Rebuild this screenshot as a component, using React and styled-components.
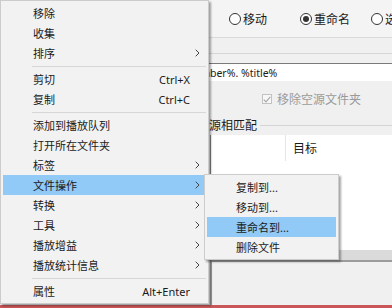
import React from 'react'
import styled, { createGlobalStyle } from 'styled-components'

const GlobalStyle = createGlobalStyle`
  html, body {
    margin: 0;
    padding: 0;
  }
  body {
    width: 392px;
    height: 308px;
    overflow: hidden;
    background: #f0f0f0;
    font-family: "Noto Sans", "Noto Sans CJK SC", sans-serif;
    font-size: 11px;
    color: #1a1a1a;
  }
`

const Screen = styled.div`
  position: relative;
  width: 392px;
  height: 308px;
  overflow: hidden;
  background: #f0f0f0;
`

const Dialog = styled.div`
  display: flex;
  flex-direction: column;
  height: 100%;
`

const RadioBar = styled.div`
  height: 37px;
  flex: none;
  display: grid;
  grid-template-columns: repeat(3, 71px);
  align-items: center;
  padding-left: 229px;
  background: #f4f4f4;
  border-bottom: 1px solid #dadada;
`

const RadioOption = styled.label`
  display: flex;
  align-items: center;
  gap: 2px;
  white-space: nowrap;
  font-size: 12px;
`

const RadioCircle = styled.span`
  width: 12px;
  height: 12px;
  flex: none;
  box-sizing: border-box;
  border: 1px solid #333;
  border-radius: 50%;
  background: #fff;
  display: flex;
  align-items: center;
  justify-content: center;

  &::after {
    content: '';
    width: 6px;
    height: 6px;
    border-radius: 50%;
    background: ${({ checked }) => (checked ? '#333' : 'transparent')};
  }
`

const Strip = styled.div`
  height: 15px;
  flex: none;
  border-bottom: 1px solid #d6d6d6;
`

const PatternField = styled.div`
  height: 17px;
  flex: none;
  margin: 9px 0 0 209px;
  border-top: 1px solid #7a7a7a;
  background: #fff;
  display: flex;
  align-items: center;
  font-size: 10.5px;
  white-space: nowrap;
  overflow: hidden;
`

const ScrolledText = styled.span`
  margin-left: ${({ offset }) => -offset}px;
`

const CheckRow = styled.div`
  height: 18px;
  flex: none;
  margin-top: 9px;
  padding-left: 262px;
  display: flex;
  align-items: center;
  gap: 5px;
  color: #9a9a9a;
  font-size: 12px;
`

const CheckBox = styled.span`
  width: 10px;
  height: 10px;
  box-sizing: border-box;
  border: 1px solid #c2c2c2;
  background: #f7f7f7;
  display: flex;
  align-items: center;
  justify-content: center;
`

const GroupTitle = styled.div`
  height: 14px;
  flex: none;
  margin-top: 10px;
  padding-left: 197px;
  display: flex;
  align-items: center;
  gap: 3px;
  font-size: 12px;
  white-space: nowrap;

  &::after {
    content: '';
    flex: 1;
    height: 1px;
    background: #d5d5d5;
  }
`

const ResultList = styled.div`
  height: 115px;
  flex: none;
  margin: 3px 0 0 210px;
  box-sizing: border-box;
  border-left: 1px solid #828282;
  background: #fff;
`

const ListHeader = styled.div`
  height: 26px;
  display: flex;
`

const HeaderCell = styled.div`
  width: ${({ width }) => width}px;
  flex: none;
  box-sizing: border-box;
  padding-left: 7px;
  display: flex;
  align-items: center;
  font-size: 12px;
  border-right: ${({ divider }) => (divider ? '1px solid #e5e5e5' : 'none')};
`

const ListFooter = styled.div`
  height: 10px;
  flex: none;
  margin-left: 210px;
  background: #dadada;
`

const StatusPanel = styled.div`
  flex: 1;
  margin-left: 210px;
  border-top: 2px solid #9c9c9c;
  border-left: 2px solid #9c9c9c;
  background: #f0f0f0;
`

const AccentLine = styled.div`
  height: 3px;
  flex: none;
  background: #c9575a;
`

const Menu = styled.div`
  position: absolute;
  left: ${({ left }) => left}px;
  top: ${({ top }) => top}px;
  width: ${({ width }) => width}px;
  box-sizing: border-box;
  padding: 2px;
  background: #f2f2f2;
  border: 1px solid #cccccc;
  box-shadow: 2px 2px 2px rgba(0, 0, 0, 0.35);
  display: flex;
  flex-direction: column;
`

const MenuItem = styled.div`
  height: 20px;
  display: flex;
  align-items: center;
  padding-left: ${({ indent }) => indent}px;
  background: ${({ active }) => (active ? '#91c9f7' : 'transparent')};
  white-space: nowrap;
`

const ItemLabel = styled.span`
  flex: 1;
`

const Shortcut = styled.span`
  color: #1a1a1a;
`

const ArrowSlot = styled.span`
  width: 16px;
  flex: none;
  display: flex;
  align-items: center;
  padding-left: 5px;
  box-sizing: border-box;
`

const Separator = styled.div`
  height: 6px;
  display: flex;
  align-items: center;
  padding-left: 29px;

  &::after {
    content: '';
    flex: 1;
    height: 1px;
    background: #d7d7d7;
  }
`

const Chevron = () => (
  <svg width="5" height="8" viewBox="0 0 5 8">
    <path d="M0.7 0.7 L4 4 L0.7 7.3" fill="none" stroke="#444" strokeWidth="1" />
  </svg>
)

const mainItems = [
  { label: '移除' },
  { label: '收集' },
  { label: '排序', sub: true },
  { sep: true },
  { label: '剪切', key: 'Ctrl+X' },
  { label: '复制', key: 'Ctrl+C' },
  { sep: true },
  { label: '添加到播放队列' },
  { label: '打开所在文件夹' },
  { label: '标签', sub: true },
  { label: '文件操作', sub: true, active: true },
  { label: '转换', sub: true },
  { label: '工具', sub: true },
  { label: '播放增益', sub: true },
  { label: '播放统计信息', sub: true },
  { sep: true },
  { label: '属性', key: 'Alt+Enter' },
]

const fileItems = [
  { label: '复制到...' },
  { label: '移动到...' },
  { label: '重命名到...', active: true },
  { label: '删除文件' },
]

export default function App() {
  return (
    <Screen>
      <GlobalStyle />
      <Dialog>
        <RadioBar>
          <RadioOption>
            <RadioCircle />
            移动
          </RadioOption>
          <RadioOption>
            <RadioCircle checked />
            重命名
          </RadioOption>
          <RadioOption>
            <RadioCircle />
            选择
          </RadioOption>
        </RadioBar>
        <Strip />
        <PatternField>
          <ScrolledText offset={55}>%tracknumber%. %title%</ScrolledText>
        </PatternField>
        <CheckRow>
          <CheckBox>
            <svg width="8" height="7" viewBox="0 0 8 7">
              <path d="M0.8 3.6 L3 5.8 L7.3 0.8" fill="none" stroke="#a8a8a8" strokeWidth="1.2" />
            </svg>
          </CheckBox>
          移除空源文件夹
        </CheckRow>
        <GroupTitle>与源相匹配</GroupTitle>
        <ResultList>
          <ListHeader>
            <HeaderCell width={75} divider />
            <HeaderCell width={107}>目标</HeaderCell>
          </ListHeader>
        </ResultList>
        <ListFooter />
        <StatusPanel />
        <AccentLine />
      </Dialog>

      <Menu left={0} top={0} width={209}>
        {mainItems.map((item, i) =>
          item.sep ? (
            <Separator key={i} />
          ) : (
            <MenuItem key={i} indent={30} active={item.active}>
              <ItemLabel>{item.label}</ItemLabel>
              {item.key && <Shortcut>{item.key}</Shortcut>}
              <ArrowSlot>{item.sub && <Chevron />}</ArrowSlot>
            </MenuItem>
          )
        )}
      </Menu>

      <Menu left={204} top={174} width={135}>
        {fileItems.map((item, i) => (
          <MenuItem key={i} indent={29} active={item.active}>
            <ItemLabel>{item.label}</ItemLabel>
          </MenuItem>
        ))}
      </Menu>
    </Screen>
  )
}
